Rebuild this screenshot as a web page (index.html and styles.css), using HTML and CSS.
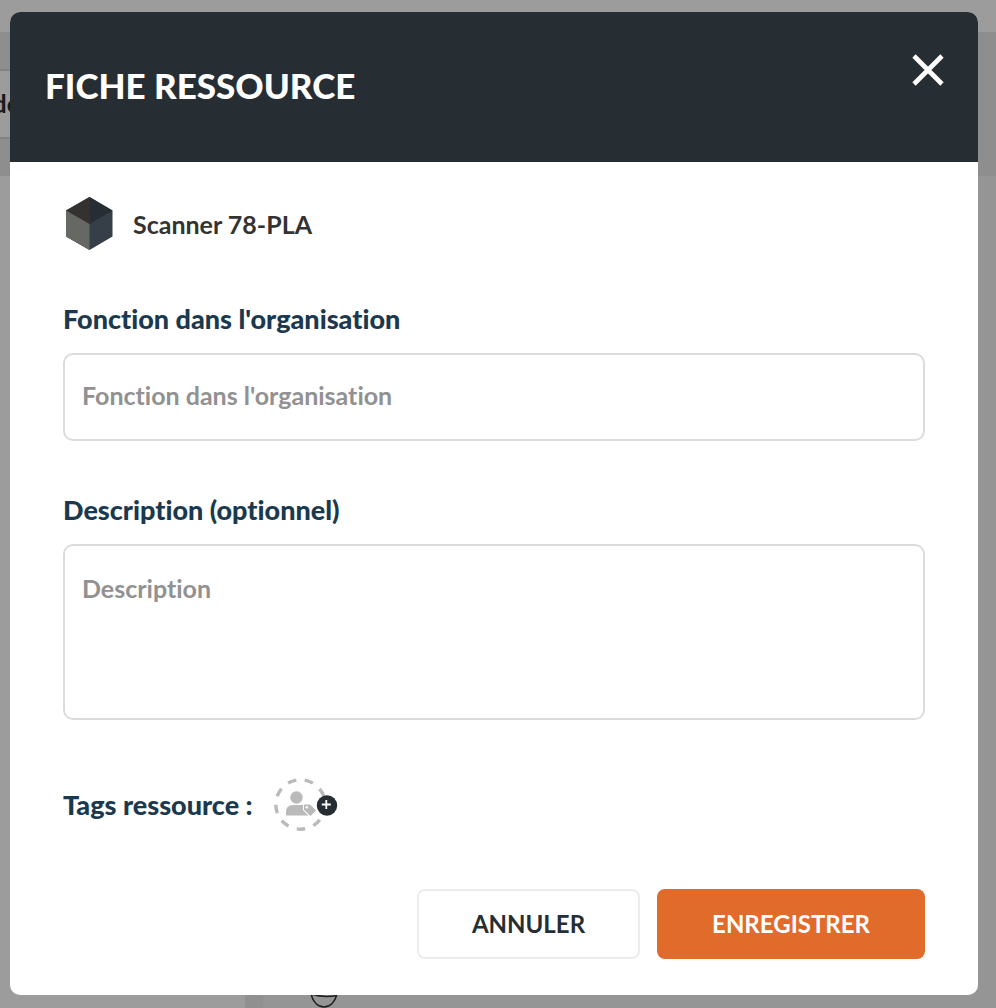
FILE: index.html
```
<!DOCTYPE html>
<html lang="fr">
  <head>
    <meta charset="UTF-8" />
    <meta name="viewport" content="width=device-width, initial-scale=1.0" />
    <title>Fiche ressource</title>
    <link rel="stylesheet" href="styles.css">
  </head>
  <body>
    <div class="page">
      <div class="page-top"></div>
      <div class="page-band">
        <div class="page-filter"><span>de</span></div>
      </div>
      <div class="page-content">
        <div class="page-side"></div>
        <div class="page-list">
          <svg class="avatar" width="28" height="28" viewBox="0 0 28 28" fill="none" stroke="#353535" stroke-width="1.6">
            <path d="M1 14C3 22 8 27 14 27S25 22 27 14" />
            <path d="M1 14Q14 18 27 15.500" />
          </svg>
        </div>
      </div>
    </div>

    <div class="overlay">
      <form class="modal" role="dialog" aria-labelledby="modalTitle">
        <div class="modal-header">
          <h2 id="modalTitle">FICHE RESSOURCE</h2>
          <button type="button" class="close" aria-label="Fermer">
            <svg width="32" height="32" viewBox="0 0 32 32" stroke="#fff" stroke-width="4.600">
              <path d="M2 2L30 30M30 2L2 30" />
            </svg>
          </button>
        </div>

        <div class="modal-body">
          <div class="resource">
            <svg width="53" height="53" viewBox="0 0 53 53">
              <path d="M26.500 0L49.500 13.500V39.500L26.500 53L3 39.500V13.500Z" fill="#363e47" />
              <path d="M26.500 0L3 13.500L26.500 27Z" fill="#333231" />
              <path d="M26.500 0L49.500 13.500L26.500 27Z" fill="#262e33" />
              <path d="M3 13.500L26.500 27V53L3 39.500Z" fill="#666863" />
            </svg>
            <span>Scanner 78-PLA</span>
          </div>

          <div class="field">
            <label for="fonction">Fonction dans l'organisation</label>
            <input type="text" id="fonction" placeholder="Fonction dans l'organisation" />
          </div>

          <div class="field">
            <label for="description">Description (optionnel)</label>
            <textarea id="description" placeholder="Description"></textarea>
          </div>

          <div class="tags">
            <span>Tags ressource :</span>
            <button type="button" class="add-tag" aria-label="Ajouter un tag">
              <svg width="64" height="53" viewBox="0 0 64 53">
                <circle cx="26.500" cy="26.500" r="24.700" fill="none" stroke="#bababa" stroke-width="3.400" stroke-dasharray="8.600 8.644" stroke-dashoffset="0.700" />
                <circle cx="22.500" cy="19.500" r="6.200" fill="#bababa" />
                <path d="M12 37.500V34Q12 27 19 27H29.500V32.500L34.500 37.500Z" fill="#bababa" />
                <path d="M29.500 27Q29.500 26 30.500 26H36L42.500 32.500L36.500 38.500L29.500 32Z" fill="#bababa" stroke="#fff" stroke-width="1" />
                <circle cx="32.800" cy="29.200" r="1.200" fill="#fff" />
                <circle cx="53" cy="27.500" r="10.200" fill="#262e33" />
                <path d="M47.800 26.500H56.800M52.300 22V31" stroke="#fff" stroke-width="1.800" />
              </svg>
            </button>
          </div>

          <div class="actions">
            <button type="button" class="btn btn-cancel">ANNULER</button>
            <button type="submit" class="btn btn-save">ENREGISTRER</button>
          </div>
        </div>
      </form>
    </div>
  </body>
</html>
```

FILE: styles.css
```
* {
  box-sizing: border-box;
}
body {
  margin: 0;
  font-family: Lato, "Open Sans", sans-serif;
  font-size: 24px;
  font-variant-ligatures: none;
  color: #262e33;
}
button,
input,
textarea {
  font-family: inherit;
  font-size: inherit;
  font-variant-ligatures: inherit;
}

/* page behind the modal */
.page {
  display: flex;
  flex-direction: column;
  height: 100vh;
  overflow: hidden;
}
.page-top {
  height: 32px;
}
.page-band {
  padding: 37px 0;
  background-color: #e9e9e9;
}
.page-filter {
  display: flex;
  justify-content: flex-end;
  align-items: center;
  width: 20px;
  height: 70px;
  padding-bottom: 2px;
  background-color: #fff;
  border-top: 2px solid #d4d4d4;
  border-bottom: 2px solid #d4d4d4;
  font-size: 25px;
  font-weight: bold;
}
.page-content {
  display: flex;
  flex: 1;
  background-color: #ebebeb;
  gap: 18px;
}
.page-side {
  width: 245px;
  background-color: #fff;
}
.page-list {
  display: flex;
  flex: 1;
  align-items: flex-end;
  padding: 0 47px;
  background-color: #f4f4f4;
}

/* modal */
.overlay {
  position: fixed;
  inset: 0;
  padding: 12px 18px 12px 10px;
  background-color: rgba(0, 0, 0, 0.39);
  overflow: auto;
}
.modal {
  background-color: #fff;
  border-radius: 10px;
  overflow: hidden;
}
.modal-header {
  display: flex;
  justify-content: space-between;
  align-items: center;
  height: 150px;
  padding: 0 34px 4px 35px;
  background-color: #262e33;
}
.modal-header h2 {
  margin: 0;
  font-size: 35px;
  font-weight: 900;
  color: #fff;
}
.close {
  align-self: flex-start;
  margin-top: 42px;
  padding: 0;
  border: none;
  background: none;
  cursor: pointer;
}
.close svg,
.add-tag svg {
  display: block;
}
.modal-body {
  padding: 35px 53px 36px;
}
.resource {
  display: flex;
  align-items: center;
  gap: 17px;
  color: #333;
  font-size: 25px;
  font-weight: bold;
}
.field {
  margin-top: 53px;
}
.field label {
  display: block;
  margin-bottom: 18px;
  line-height: 32px;
}
.field label,
.tags span {
  font-size: 27px;
  font-weight: 900;
  color: #1b394e;
}
.field input,
.field textarea {
  display: block;
  width: 100%;
  height: 88px;
  padding: 0 17px 4px;
  border: 2px solid #dcdcdc;
  border-radius: 10px;
  font-size: 25px;
  font-weight: bold;
}
.field textarea {
  height: 176px;
  padding: 26px 17px;
  line-height: 32px;
  resize: none;
}
::placeholder {
  color: #919191;
}
.tags {
  display: flex;
  align-items: center;
  gap: 21px;
  margin-top: 58px;
}
.add-tag {
  padding: 0;
  border: none;
  background: none;
  cursor: pointer;
}
.actions {
  display: flex;
  justify-content: flex-end;
  gap: 17px;
  margin-top: 58px;
}
.btn {
  height: 70px;
  padding: 0 53px 2px;
  border: 2px solid #ececec;
  border-radius: 8px;
  font-weight: bold;
  cursor: pointer;
}
.btn-cancel {
  background-color: #fff;
  color: #262e33;
}
.btn-save {
  border-color: #e16b2b;
  background-color: #e16b2b;
  color: #fff;
}
```
